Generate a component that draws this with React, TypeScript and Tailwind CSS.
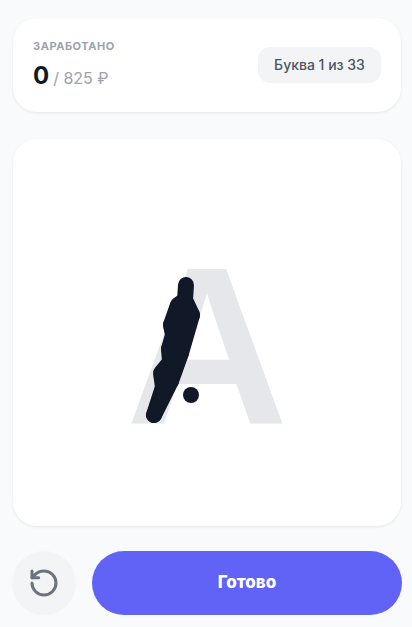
import { RotateCcw } from "lucide-react";

export default function App() {
  return (
    <div className="h-[627px] w-[412px] overflow-hidden bg-[#f9fafb] pl-3 pr-2.5 pt-[18px] flex flex-col font-['Inter',sans-serif]">
      <div className="mx-px flex h-[94px] items-center justify-between rounded-3xl bg-white px-5 shadow-[0_1px_3px_rgba(0,0,0,0.08)]">
        <div className="flex flex-col">
          <span className="mt-px text-[11px] leading-[15px] font-bold tracking-[0.55px] text-[#9ca3af]">ЗАРАБОТАНО</span>
          <div className="mt-1.5 flex items-baseline gap-1">
            <span className="text-[24px] leading-8 font-bold text-[#111827]">0</span>
            <span className="text-base text-[#9ca3af]">/ 825 ₽</span>
          </div>
        </div>
        <div className="flex h-9 w-[123px] items-center justify-center rounded-xl bg-[#f3f4f6] text-sm font-medium text-[#4b5563]">Буква 1 из 33</div>
      </div>
      <div className="relative mx-px mt-[27px] flex h-[387px] items-center justify-center overflow-hidden rounded-3xl bg-white shadow-[0_1px_3px_rgba(0,0,0,0.08)]">
        <span className="pt-[27px] font-['Liberation_Sans',sans-serif] text-[225px] leading-none font-bold text-[#e5e7eb] select-none">А</span>
        <svg className="absolute left-0 top-0" width="388" height="387" viewBox="13 139 388 387" fill="none">
          <g stroke="#111827" strokeWidth="16" strokeLinecap="round" strokeLinejoin="round">
            <path d="M154 415 L171 381 L181 353 L192 315 L185 300 L186 285" />
            <path d="M154 415 L163 387" />
            <path d="M163 387 L161 373 L170 362 L169 349 L173 335 L171 325 L178 305 L185 300" />
            <path d="M171 325 L192 315 M169 349 L181 353 M171 372 L175 340 L183 325 M163 387 L171 381" />
          </g>
          <circle cx="191" cy="395" r="8" fill="#111827" />
        </svg>
      </div>
      <div className="mt-[25px] flex gap-4">
        <button className="flex h-16 w-16 items-center justify-center rounded-full bg-[#f3f4f6] text-[#6b7280]">
          <RotateCcw size={32} strokeWidth={2.25} />
        </button>
        <button className="flex h-16 w-[310px] items-center justify-center rounded-full bg-[#6063f5] text-[17px] font-extrabold text-white">Готово</button>
      </div>
    </div>
  );
}
